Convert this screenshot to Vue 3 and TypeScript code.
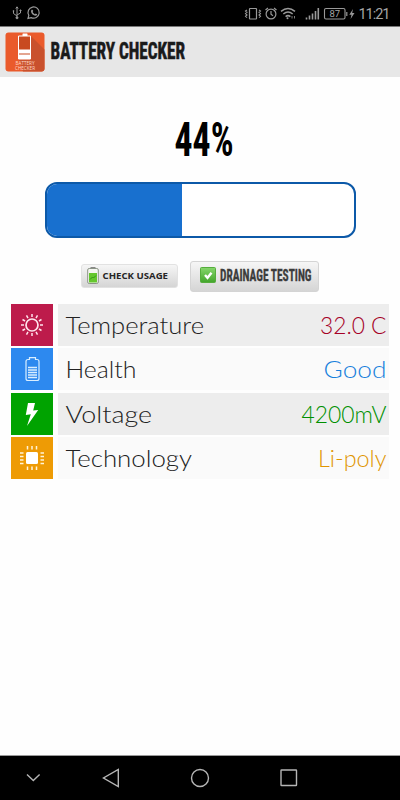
<script setup lang="ts">
interface Reading {
  kind: 'temperature' | 'health' | 'voltage' | 'technology'
  label: string
  labelWidth: number
  value: string
  valueWidth: number
}

const level = 44
const readings: Reading[] = [
  { kind: 'temperature', label: 'Temperature', labelWidth: 138.5, value: '32.0 C', valueWidth: 66.5 },
  { kind: 'health', label: 'Health', labelWidth: 71, value: 'Good', valueWidth: 63 },
  { kind: 'voltage', label: 'Voltage', labelWidth: 86.5, value: '4200mV', valueWidth: 85 },
  { kind: 'technology', label: 'Technology', labelWidth: 126.5, value: 'Li-poly', valueWidth: 68.5 },
]
const rays = Array.from({ length: 12 }, (_, i) => i * 30)
</script>

<template>
  <div class="screen">
    <div class="status">
      <svg class="left-icons" width="32" height="14" viewBox="0 0 32 14" fill="none" stroke="#999" stroke-width="1">
        <path d="M5 1v11M1.5 5v2.5L5 10M8.5 4.5v2.5L5 9M3.8 2.5L5 .8l1.2 1.7" />
        <circle cx="5" cy="11.8" r="1" fill="#999" />
        <circle cx="1.5" cy="5" r=".5" /><path d="M8 4h1v1h-1z" />
        <path d="M16 12.4l.8-3a5.6 5.6 0 1 1 2.4 2.2z" stroke-width="1.2" />
        <path d="M19.4 4c.8-.8 1.5-.2 1.8 1.1l-.6.9c.5 1 1.3 1.8 2.3 2.2l.9-.7c1.4.5 1.8 1 1 1.8-2.8 1.6-7-2.6-5.4-5.3z" fill="#999" stroke="none" />
      </svg>
      <svg class="right-icons" width="148" height="16" viewBox="0 0 148 16" fill="none" stroke="#999" stroke-width="1.2">
        <rect x="5.5" y="2.5" width="7" height="10.5" rx=".5" />
        <path d="M3 4L1.500 5l1.500 1.300L1.500 7.600 3 9l-1.500 1.300L3 11.600M15 4l1.500 1L15 6.300l1.500 1.300L15 9l1.500 1.300-1.500 1.300" stroke-width="1.1" />
        <circle cx="27" cy="8" r="4.900" /><path d="M27 5v3.300l2 1.400M21.500 4l2.500-2M32.500 4l-2.500-2" />
        <path d="M37 5.300q7-5.500 14 0M39.300 8q4.700-3.800 9.400 0M41.600 10.600q2.400-2 4.800 0" stroke-width="1.500" />
        <circle cx="43.500" cy="12.200" r="1" fill="#999" stroke="none" />
        <path d="M48 12.500V10M50.500 10v2.500" stroke-width=".8" />
        <path d="M62.500 13.500v-2M65.500 13.500v-4M68.500 13.500V7.500M71.500 13.500V5M74.300 13.500V2" stroke-width="1.600" />
        <rect x="80.500" y="2.500" width="20.500" height="10.500" rx="1.500" stroke-width="1.100" /><path d="M102.800 6v4" />
        <text x="85.500" y="11.400" class="tiny" textLength="10.500">87</text>
        <path d="M109 3l-3.700 5.700h2.200L106.600 13l3.900-6h-2.300z" fill="#999" stroke="none" />
        <text x="114.500" y="12.800" class="clock" textLength="32">11:21</text>
      </svg>
    </div>

    <header class="header">
      <svg class="logo" width="40" height="40" viewBox="0 0 40 40">
        <rect x=".5" y=".5" width="39" height="39" rx="3" fill="#ea5a2b" />
        <path d="M26 4l13.500 13.500v19q0 3-3 3H18l-4-12h12z" fill="#c9512d" />
        <rect x="17.500" y="1.500" width="5" height="2.500" rx=".5" fill="#fff" />
        <path d="M13.500 4h12v23h-12z" fill="#c84a20" stroke="#fff" stroke-width="1" />
        <path d="M13.500 17.500h12v4h-12zM13.500 22.500h12v4.500h-12z" fill="#fff" />
        <text x="20" y="32.600" textLength="19" lengthAdjust="spacingAndGlyphs">BATTERY</text>
        <text x="20" y="37.600" textLength="20" lengthAdjust="spacingAndGlyphs">CHECKER</text>
      </svg>
      <svg class="title" width="140" height="30">
        <text x=".5" y="23" textLength="134.500" lengthAdjust="spacingAndGlyphs">BATTERY CHECKER</text>
      </svg>
    </header>

    <main class="content">
      <svg class="percent" width="68" height="44">
        <text x="4.500" y="39.500" textLength="59" lengthAdjust="spacingAndGlyphs">{{ level }}%</text>
      </svg>
      <div class="meter"><div class="fill" :style="{ width: level + '%' }"></div></div>

      <div class="actions">
        <button class="action usage">
          <svg width="90" height="22">
            <rect x="8.500" y="2" width="5" height="2" fill="#888" />
            <rect x="5.700" y="3.500" width="10.600" height="15" rx="1.500" fill="#f4f6f0" stroke="#8a9385" />
            <rect x="7" y="8" width="8" height="9.500" fill="#65c72d" /><path d="M8 14.500l2.500-2.500 1 1L14 10.500" fill="none" stroke="#309715" />
            <text x="20.500" y="13.500" textLength="65.500" lengthAdjust="spacingAndGlyphs">CHECK USAGE</text>
          </svg>
        </button>
        <button class="action drainage">
          <svg width="126" height="28">
            <defs><linearGradient id="tick-green" x2="0" y2="1"><stop stop-color="#86d66c" /><stop offset="1" stop-color="#42a52b" /></linearGradient></defs>
            <rect x="9.500" y="5.500" width="15" height="15" rx="1" fill="url(#tick-green)" stroke="#55ad3c" />
            <path d="M14 13l2.500 2.800 4-5" fill="none" stroke="#fff" stroke-width="2.400" />
            <text x="29" y="18.800" textLength="91.500" lengthAdjust="spacingAndGlyphs">DRAINAGE TESTING</text>
          </svg>
        </button>
      </div>

      <div class="readings">
        <div v-for="r in readings" :key="r.kind" class="reading" :class="r.kind">
          <div class="tile">
            <svg width="42" height="42" viewBox="0 0 42 42">
              <g v-if="r.kind === 'temperature'" fill="none" stroke="#ffe5ec">
                <circle cx="21" cy="21" r="6" stroke-width="1.700" />
                <path v-for="a in rays" :key="a" d="M21 10v3" stroke-width="1.500" :transform="`rotate(${a} 21 21)`" />
              </g>
              <g v-else-if="r.kind === 'health'" fill="none" stroke="#d9eeff">
                <path d="M18.500 11.500v-1.800h6v1.800h1.500q2 0 2 2v17q0 2-2 2h-9q-2 0-2-2v-17q0-2 2-2z" stroke-width="1.200" />
                <path d="M17 19.500h9M17 22h9M17 24.500h9M17 27h9M17 29.500h9" stroke-width="1.400" />
              </g>
              <path v-else-if="r.kind === 'voltage'" d="M17 10h7l-1.800 7.500 5-.6L16 33l3.800-11.800-5 .9z" fill="#fff" />
              <g v-else>
                <rect x="15" y="15" width="12" height="12" rx="1.500" fill="#fff" />
                <path d="M16.500 9v3.500M21 9v3.500M25.500 9v3.500M16.500 29.500V33M21 29.500V33M25.500 29.500V33M9 16h3.500M9 19.500h3.500M9 23h3.500M9 26.500h3.500M29.500 16H33M29.500 19.500H33M29.500 23H33M29.500 26.500H33" stroke="#fff4d9" stroke-width="1.500" />
              </g>
            </svg>
          </div>
          <svg class="row" width="331" height="42">
            <text class="label" x="7.500" y="29.500" :textLength="r.labelWidth" lengthAdjust="spacingAndGlyphs">{{ r.label }}</text>
            <text class="value" :x="328.500 - r.valueWidth" y="29.500" :textLength="r.valueWidth" lengthAdjust="spacingAndGlyphs">{{ r.value }}</text>
          </svg>
        </div>
      </div>
    </main>

    <nav class="navbar">
      <svg width="400" height="44" viewBox="0 0 400 44" fill="none" stroke="#b5b5b5" stroke-width="1.400">
        <path d="M27 18.500l6.300 6 6.300-6M118.300 13.500v17l-14.800-8.500z" />
        <circle cx="200" cy="22" r="8.500" />
        <rect x="281" y="14" width="15.500" height="15.500" rx=".5" />
      </svg>
    </nav>
  </div>
</template>

<style>
body { margin: 0; background: #fff; }
</style>

<style scoped>
.screen { width: 400px; height: 800px; display: flex; flex-direction: column; background: #fefefe; overflow: hidden; font-family: "Liberation Sans", sans-serif; }
svg { display: block; flex: none; overflow: visible; }
.status { box-sizing: border-box; height: 27px; flex: none; background: #000; border-bottom: 1px solid #777; display: flex; justify-content: space-between; padding: 6px 8px 0 12px; }
.status text { fill: #a5a5a5; stroke: none; font-family: Roboto, sans-serif; }
.tiny { font-size: 9.500px; }
.clock { font-size: 14.500px; }
.header { height: 50px; flex: none; background: #e7e7e7; display: flex; padding: 5px 0 0 5px; box-sizing: border-box; }
.logo text { font: 5px "Open Sans", sans-serif; fill: #ffd9c8; text-anchor: middle; }
.title { margin: 4px 0 0 5px; }
.title text { font: bold 24px Roboto, sans-serif; font-stretch: 75%; fill: #1a1a1a; stroke: #1a1a1a; stroke-width: .6px; }
.content { flex: 1; display: flex; flex-direction: column; align-items: center; }
.percent { margin: 39px 0 0 8px; }
.percent text { font: bold 49px Roboto, sans-serif; font-stretch: 75%; fill: #000; }
.meter { box-sizing: border-box; width: 311px; height: 56px; margin-top: 22px; border: 2px solid #0c59a8; border-radius: 12px; overflow: hidden; background: #fff; }
.fill { height: 100%; background: #1870cf; }
.actions { display: flex; align-items: center; gap: 12px; margin-top: 22px; height: 33px; }
.action { box-sizing: border-box; padding: 0; border: 1px solid #d4d4d4; border-radius: 3px; background: linear-gradient(#f6f6f6, #d5d5d5); }
.usage { width: 97px; height: 24px; margin-bottom: 2px; border-color: #e2e2e2; }
.drainage { width: 129px; height: 31px; margin-bottom: 1px; }
.usage text { font: bold 9.500px "Open Sans", sans-serif; fill: #252525; }
.drainage text { font: bold 16px Roboto, sans-serif; font-stretch: 75%; fill: #3c3c3c; stroke: #3c3c3c; stroke-width: .3px; }
.readings { display: flex; flex-direction: column; gap: 2.400px; margin-top: 11px; }
.reading { display: flex; gap: 5px; height: 42px; }
.tile { width: 42px; height: 42px; }
.row { background: #fafafa; }
.row text { font-family: Lato, sans-serif; font-size: 22.500px; font-weight: 300; }
.label { fill: #222; }
.temperature .row, .voltage .row { background: #ededed; }
.temperature .tile { background: #bd1b4b; }
.health .tile { background: #2d89ef; }
.voltage .tile { background: #00a300; }
.technology .tile { background: #ee9b05; }
.temperature .value { fill: #a50026; }
.health .value { fill: #1780dc; }
.voltage .value { fill: #009000; }
.technology .value { fill: #e09500; }
.navbar { height: 44px; flex: none; background: #000; border-top: 1px solid #999; }
</style>
